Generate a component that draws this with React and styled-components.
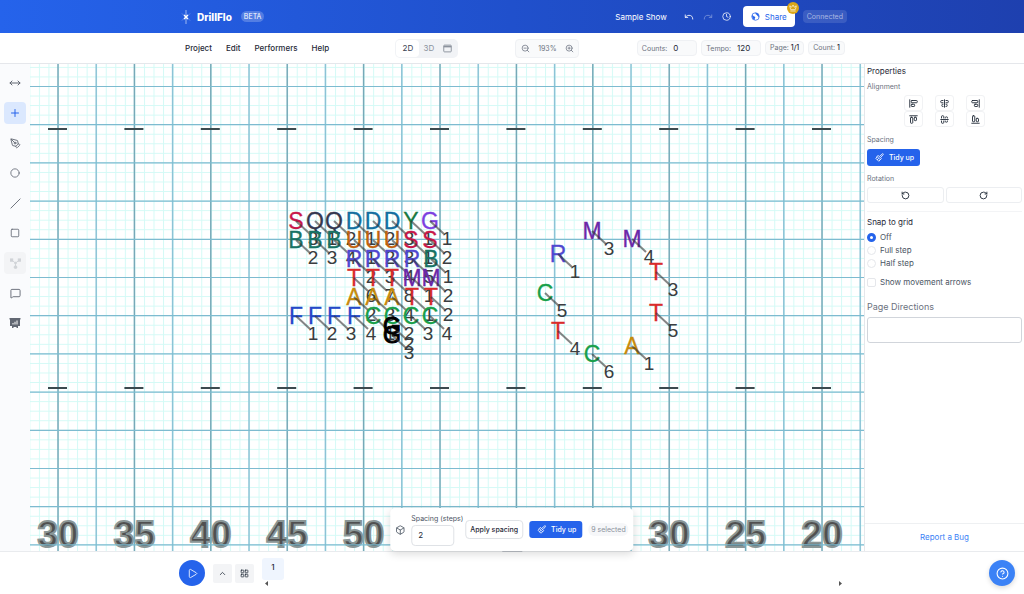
import React, { useState } from "react";
import styled, { createGlobalStyle, css } from "styled-components";
import {
  AlignEndHorizontal,
  AlignEndVertical,
  AlignCenterHorizontal,
  AlignCenterVertical,
  AlignStartHorizontal,
  AlignStartVertical,
  Box,
  ChevronUp,
  CircleHelp,
  Circle,
  Clock,
  Crown,
  LayoutGrid,
  MessageSquare,
  MoveHorizontal,
  PenTool,
  Play,
  Plus,
  Redo,
  RotateCcw,
  RotateCw,
  Slash,
  Square,
  Undo,
  ZoomIn,
  ZoomOut
} from "lucide-react";

const YARD = 76.4;
const FIRST_YARD = 28;
const FIRST_ROW = 22;

const yardNumbers = ["30", "35", "40", "45", "50", "45", "40", "35", "30", "25", "20"];

const colors = {
  S: "#c8174a",
  Q: "#34384f",
  D: "#136f9f",
  Y: "#187a42",
  G: "#7c3fe0",
  B: "#177366",
  U: "#c2630f",
  R: "#5048d0",
  T: "#d92b2b",
  M: "#6b28a8",
  A: "#c78a0c",
  F: "#2448c8",
  C: "#18a04a"
};

// one entry per row of the block: y, first x, symbols, labels
const block = [
  [157, 266, "SQQDDDYG", "31212311"],
  [176, 266, "BBBUUUSS", "23412312"],
  [195, 324, "RRRRB", "23451"],
  [214, 324, "TTTMM", "67812"],
  [233, 324, "AAATT", "23412"],
  [252, 266, "FFFFCCCC", "12341234"]
];

const blockMarchers = block.flatMap(([y, x, symbols, labels]) =>
  symbols.split("").map((symbol, i) => ({ symbol, label: labels[i], x: Math.round(x + i * 19.2), y }))
);

const circleMarchers = [
  { symbol: "M", label: "3", x: 562, y: 167 },
  { symbol: "M", label: "4", x: 602, y: 175 },
  { symbol: "R", label: "1", x: 528, y: 190 },
  { symbol: "T", label: "3", x: 626, y: 208 },
  { symbol: "C", label: "5", x: 515, y: 229 },
  { symbol: "T", label: "5", x: 626, y: 249 },
  { symbol: "T", label: "4", x: 528, y: 267 },
  { symbol: "C", label: "6", x: 562, y: 290 },
  { symbol: "A", label: "1", x: 602, y: 282 }
];

const stacked = [
  { symbol: "G", label: "2", x: 362, y: 262, color: "#000" },
  { symbol: "G", label: "3", x: 362, y: 271, color: "#000" }
];

const marchers = [...blockMarchers, ...stacked, ...circleMarchers];

function BrushIcon() {
  return (
    <svg width="9" height="9" viewBox="0 0 24 24" fill="none" stroke="currentColor" strokeWidth="2.2" strokeLinecap="round" strokeLinejoin="round">
      <path d="M13 8 20 2c1-1 3 1 2 2l-6 7" />
      <path d="m9 7 8 8-3 3-8-8z" />
      <path d="M6 10 2 14l8 8 4-4M6 18l3-3" />
    </svg>
  );
}

function GlobeIcon() {
  return (
    <svg width="9" height="9" viewBox="0 0 24 24" fill="none" stroke="currentColor" strokeWidth="2">
      <circle cx="12" cy="12" r="10" />
      <path d="M3 8c3 0 3 4 6 4s3 3 1 5v4c-4-1-8-6-7-13zM12 2c-1 3 1 5 3 5s1 4 4 4l2 4c2-6-2-12-9-13z" fill="currentColor" stroke="none" />
    </svg>
  );
}

function WindowIcon() {
  return (
    <svg width="9" height="9" viewBox="0 0 24 24" fill="none" stroke="currentColor" strokeWidth="2.5">
      <rect x="2" y="3" width="20" height="18" rx="2" />
      <path d="M2 7h20" strokeWidth="4" />
    </svg>
  );
}

function LogoMark() {
  return (
    <svg width="12" height="16" viewBox="0 0 12 16" fill="none" stroke="#fff">
      <path d="M6 1v14" strokeWidth="0.7" opacity="0.8" />
      <path d="M4 6 8 10M8 6 4 10" strokeWidth="1.5" />
      <path d="M2 4.500 3.500 6M10 4.500 8.500 6M2 11.500 3.500 10M10 11.500 8.500 10" strokeWidth="0.5" opacity="0.6" />
    </svg>
  );
}

function NodesIcon() {
  return (
    <svg width="11" height="11" viewBox="0 0 24 24" fill="currentColor" stroke="currentColor" strokeWidth="2">
      <path d="M4 5 12 11 20 5M12 11v8" fill="none" />
      <rect x="1" y="2" width="5" height="5" />
      <rect x="18" y="2" width="5" height="5" />
      <circle cx="12" cy="11" r="2" />
      <circle cx="12" cy="20" r="3" />
    </svg>
  );
}

function SlidesIcon() {
  return (
    <svg width="12" height="12" viewBox="0 0 24 24">
      <path d="M1 2h22v3h-1v13h-4v4h-3v-2H9v2H6v-4H2V5H1z" fill="currentColor" />
      <path d="M8 15v-3M12 15V9.500M16 15V7" stroke="#fff" strokeWidth="2" />
    </svg>
  );
}

function Marcher({ symbol, label, x, y, color }) {
  const fill = color || colors[symbol];
  return (
    <g>
      <Symbol x={x} y={y + 8} fill={fill} stroke={fill} strokeWidth={color ? 1 : 0.3}>{symbol}</Symbol>
      <line x1={x} y1={y} x2={x + 14} y2={y + 13} stroke="#333" strokeOpacity="0.6" strokeWidth="2" />
      <Label x={x + 17} y={y + 24}>{label}</Label>
    </g>
  );
}

function Field() {
  return (
    <FieldSvg role="img" aria-label="Drill field">
      <defs>
        <pattern id="steps" x={FIRST_YARD} y={FIRST_ROW} width="9.55" height="9.55" patternUnits="userSpaceOnUse">
          <path d="M0 0.500H9.550M0.500 0V9.550" stroke="#d4faf6" fill="none" />
        </pattern>
      </defs>
      <rect width="100%" height="100%" fill="url(#steps)" />
      {yardNumbers.map((number, i) => (
        <YardNumber key={i} x={FIRST_YARD + i * YARD} y="483">{number}</YardNumber>
      ))}
      {Array.from({ length: 22 }, (_, i) => (
        <line
          key={i}
          x1={FIRST_YARD + (i * YARD) / 2}
          x2={FIRST_YARD + (i * YARD) / 2}
          y1="0"
          y2="100%"
          stroke={i % 2 ? "#8cc3d6" : "#76a9b8"}
          strokeWidth="1.500"
        />
      ))}
      {Array.from({ length: 13 }, (_, i) => (
        <line
          key={i}
          x1="0"
          x2="100%"
          y1={FIRST_ROW + 0.5 + (i * YARD) / 2}
          y2={FIRST_ROW + 0.5 + (i * YARD) / 2}
          stroke="#7dbbd0"
          strokeWidth="1.200"
        />
      ))}
      {yardNumbers.map((_, i) => (
        <path
          key={i}
          d={`M${FIRST_YARD - 10 + i * YARD} 65h19M${FIRST_YARD - 10 + i * YARD} 324h19`}
          stroke="#3c4a4f"
          strokeWidth="1.800"
        />
      ))}
      {marchers.map((marcher, i) => (
        <Marcher key={i} {...marcher} />
      ))}
    </FieldSvg>
  );
}

const tools = [
  ["Move", <MoveHorizontal size={12} />],
  ["Add marcher", <Plus size={12} />],
  ["Pen", <PenTool size={11} />],
  ["Circle", <Circle size={10} />],
  ["Line", <Slash size={11} />],
  ["Square", <Square size={10} />],
  ["Nodes", <NodesIcon />],
  ["Comment", <MessageSquare size={11} />],
  ["Slides", <SlidesIcon />]
];

const alignments = [
  ["Align left", AlignStartVertical],
  ["Align center", AlignCenterVertical],
  ["Align right", AlignEndVertical],
  ["Align top", AlignStartHorizontal],
  ["Align middle", AlignCenterHorizontal],
  ["Align bottom", AlignEndHorizontal]
];

function App() {
  const [snap, setSnap] = useState("Off");

  return (
    <Page>
      <GlobalStyle />
      <Header>
        <Container>
          <LogoMark />
          <Brand>DrillFlo</Brand>
          <Beta>BETA</Beta>
          <Filler />
          <ShowName>Sample Show</ShowName>
          <HeaderIcons>
            <HeaderButton aria-label="Undo"><Undo size={10} /></HeaderButton>
            <HeaderButton aria-label="Redo" $dim><Redo size={10} /></HeaderButton>
            <HeaderButton aria-label="History"><Clock size={9} /></HeaderButton>
          </HeaderIcons>
          <ShareButton>
            <GlobeIcon />
            Share
            <CrownBadge><Crown size={8} /></CrownBadge>
          </ShareButton>
          <Status>Connected</Status>
        </Container>
      </Header>

      <MenuBar>
        <Container>
          <Menu>
            <MenuItem>Project</MenuItem>
            <MenuItem>Edit</MenuItem>
            <MenuItem>Performers</MenuItem>
            <MenuItem>Help</MenuItem>
          </Menu>
          <ViewSwitch>
            <ViewButton $active>2D</ViewButton>
            <ViewButton>3D</ViewButton>
            <ViewButton aria-label="Split view"><WindowIcon /></ViewButton>
          </ViewSwitch>
          <ZoomGroup>
            <PlainButton aria-label="Zoom out"><ZoomOut size={9} /></PlainButton>
            <span>193%</span>
            <PlainButton aria-label="Zoom in"><ZoomIn size={9} /></PlainButton>
          </ZoomGroup>
          <Stats>
            <StatField>
              Counts:
              <StatInput defaultValue="0" />
            </StatField>
            <StatField>
              Tempo:
              <StatInput defaultValue="120" />
            </StatField>
            <Stat>Page: <b>1/1</b></Stat>
            <Stat>Count: <b>1</b></Stat>
          </Stats>
        </Container>
      </MenuBar>

      <Workspace>
        <Toolbar>
          {tools.map(([name, icon]) => (
            <Tool key={name} aria-label={name} $active={name === "Add marcher"} $disabled={name === "Nodes"}>
              {icon}
            </Tool>
          ))}
        </Toolbar>
        <Canvas>
          <Field />
        </Canvas>
        <Panel>
          <PanelBody>
            <PanelTitle>Properties</PanelTitle>
            <SectionLabel>Alignment</SectionLabel>
            <AlignGrid>
              {alignments.map(([name, Icon]) => (
                <AlignButton key={name} aria-label={name}><Icon size={9} strokeWidth={2.4} /></AlignButton>
              ))}
            </AlignGrid>
            <SectionLabel>Spacing</SectionLabel>
            <TidyRow>
              <TidyButton>
                <BrushIcon />
                Tidy up
              </TidyButton>
            </TidyRow>
            <SectionLabel>Rotation</SectionLabel>
            <RotationRow>
              <RotateButton aria-label="Rotate left"><RotateCcw size={9} strokeWidth={2.4} /></RotateButton>
              <RotateButton aria-label="Rotate right"><RotateCw size={9} strokeWidth={2.4} /></RotateButton>
            </RotationRow>
            <SnapGroup>
              <Legend>Snap to grid</Legend>
              {["Off", "Full step", "Half step"].map((name) => (
                <Option key={name}>
                  <Radio name="snap" checked={snap === name} onChange={() => setSnap(name)} />
                  {name}
                </Option>
              ))}
            </SnapGroup>
            <Option>
              <Checkbox />
              Show movement arrows
            </Option>
            <DirectionsLabel htmlFor="directions">Page Directions</DirectionsLabel>
            <Directions id="directions" />
          </PanelBody>
          <PanelFooter>
            <a href="#bug">Report a Bug</a>
          </PanelFooter>
        </Panel>
        <SpacingBar>
          <Box size={10} />
          <SpacingField>
            Spacing (steps)
            <SpacingInput defaultValue="2" />
          </SpacingField>
          <ApplyButton>Apply spacing</ApplyButton>
          <TidyButton>
            <BrushIcon />
            Tidy up
          </TidyButton>
          <Selected>9 selected</Selected>
          <Handle />
        </SpacingBar>
      </Workspace>

      <Footer>
        <Timeline>
          <PlayButton aria-label="Play"><Play size={11} strokeWidth={1.8} /></PlayButton>
          <TimelineTools>
            <SmallButton aria-label="Expand"><ChevronUp size={9} /></SmallButton>
            <SmallButton aria-label="Pages"><LayoutGrid size={9} /></SmallButton>
          </TimelineTools>
          <Pages>
            <PageTab>1</PageTab>
            <ScrollTrack>
              <svg width="3" height="5" viewBox="0 0 3 5"><path d="M3 0v5L0 2.500z" fill="#555" /></svg>
              <svg width="3" height="5" viewBox="0 0 3 5"><path d="M0 0v5l3-2.500z" fill="#555" /></svg>
            </ScrollTrack>
          </Pages>
        </Timeline>
        <HelpButton aria-label="Help"><CircleHelp size={13} /></HelpButton>
      </Footer>
    </Page>
  );
}

const GlobalStyle = createGlobalStyle`
  * {
    box-sizing: border-box;
  }
  body {
    margin: 0;
    font-family: Inter, "Liberation Sans", sans-serif;
    font-size: 8px;
    color: #1f2937;
    background: #fff;
  }
  button, input, textarea {
    font: inherit;
    color: inherit;
  }
  button {
    display: flex;
    align-items: center;
    justify-content: center;
    padding: 0;
    border: 0;
    background: none;
    cursor: pointer;
  }
  svg {
    flex: none;
  }
`;

const Page = styled.div`
  display: flex;
  flex-direction: column;
  height: 100vh;
`;

const Header = styled.header`
  display: flex;
  justify-content: center;
  height: 33px;
  color: #fff;
  background: linear-gradient(90deg, #2563eb 0%, #2050cc 50%, #1e40af 100%);
`;

const Container = styled.div`
  display: flex;
  align-items: center;
  width: 100%;
  max-width: 670px;
  padding-left: 3px;
`;

const Brand = styled.span`
  font-size: 10px;
  font-weight: 800;
  margin-left: 5px;
`;

const Beta = styled.span`
  font-size: 7px;
  line-height: 11px;
  margin-left: 9px;
  padding: 0 3px;
  border-radius: 6px;
  background: rgba(255,255,255,0.22);
`;

const Filler = styled.div`
  flex: 1;
`;

const ShowName = styled.span`
  font-weight: 400;
`;

const HeaderIcons = styled.div`
  display: flex;
  gap: 9px;
  margin: 0 11px 0 17px;
`;

const HeaderButton = styled.button`
  width: 10px;
  opacity: ${(props) => (props.$dim ? 0.4 : 1)};
`;

const ShareButton = styled.button`
  position: relative;
  gap: 5px;
  width: 52px;
  height: 21px;
  border-radius: 4px;
  color: #2563eb;
  background: #fff;
  font-weight: 400;
`;

const CrownBadge = styled.span`
  position: absolute;
  top: -4px;
  right: -4px;
  display: flex;
  align-items: center;
  justify-content: center;
  width: 12px;
  height: 12px;
  border-radius: 50%;
  color: #fff;
  background: #dba617;
`;

const Status = styled.span`
  margin-left: 8px;
  padding: 0 4px;
  border-radius: 4px;
  line-height: 13px;
  color: rgba(255,255,255,0.55);
  background: rgba(255,255,255,0.12);
  font-size: 7px;
`;

const MenuBar = styled.div`
  display: flex;
  justify-content: center;
  height: 31px;
  border-bottom: 1px solid #e5e7eb;
`;

const Menu = styled.nav`
  display: flex;
  gap: 14px;
  flex: 213;
  padding-left: 5px;
`;

const MenuItem = styled.button`
  font-weight: 500;
`;

const ViewSwitch = styled.div`
  display: flex;
  align-items: center;
  padding: 1px;
  border-radius: 5px;
  background: #f1f3f6;
`;

const ViewButton = styled.button`
  width: ${(props) => (props.$active ? "23px" : "19px")};
  height: 17px;
  border-radius: 4px;
  color: #8b929d;

  ${(props) =>
    props.$active &&
    css`
      color: #374151;
      background: #fff;
    `}
`;

const ZoomGroup = styled.div`
  display: flex;
  align-items: center;
  justify-content: space-between;
  width: 64px;
  height: 19px;
  margin-left: 57px;
  padding: 0 4px;
  border: 1px solid #eff1f4;
  border-radius: 4px;
  color: #6b7280;
  background: #f9fafb;
  font-size: 7px;
`;

const PlainButton = styled.button`
  width: 10px;
`;

const Stats = styled.div`
  display: flex;
  align-items: center;
  justify-content: flex-end;
  gap: 4px;
  flex: 269;
  padding-right: 2px;
  font-size: 7px;
`;

const Stat = styled.span`
  padding: 0 4px;
  border: 1px solid #eff1f4;
  border-radius: 4px;
  line-height: 12px;
  color: #6b7280;
  background: #f9fafb;

  b {
    color: #1f2937;
    font-weight: 500;
  }
`;

const StatField = styled.label`
  display: flex;
  align-items: center;
  height: 16px;
  padding: 0 4px;
  border: 1px solid #eff1f4;
  border-radius: 4px;
  color: #6b7280;
  background: #f9fafb;
`;

const StatInput = styled.input`
  width: 21px;
  margin-left: 4px;
  padding: 0 2px;
  border: 0;
  outline: 0;
  color: #1f2937;
  background: none;
  font-size: 8px;
`;

const Workspace = styled.main`
  position: relative;
  display: flex;
  flex: 1;
  min-height: 0;
  border-bottom: 1px solid #e9ebee;
`;

const Toolbar = styled.div`
  display: flex;
  flex-direction: column;
  align-items: center;
  gap: 8px;
  width: 30px;
  padding-top: 8px;
  background: #fafbfd;
`;

const Tool = styled.button`
  width: 22px;
  height: 22px;
  border-radius: 4px;
  color: #626873;

  ${(props) =>
    props.$active &&
    css`
      color: #2563eb;
      background: #dbe8fe;
    `}

  ${(props) =>
    props.$disabled &&
    css`
      color: #d0d3d7;
      background: #f3f4f6;
    `}
`;

const Canvas = styled.div`
  flex: 1;
  min-width: 0;
  overflow: hidden;
`;

const FieldSvg = styled.svg`
  display: block;
  width: 100%;
  height: 100%;
  font-family: "Liberation Sans", Arial, sans-serif;
  text-anchor: middle;
`;

const YardNumber = styled.text`
  font-size: 37px;
  font-weight: 700;
  fill: #505050;
  stroke: #8a9696;
  stroke-width: 2px;
`;

const Symbol = styled.text`
  font-size: 23px;
`;

const Label = styled.text`
  font-size: 19px;
  fill: #3a3d40;
`;

const Panel = styled.aside`
  display: flex;
  flex-direction: column;
  width: 160px;
  border-left: 1px solid #e5e7eb;
`;

const PanelBody = styled.div`
  display: flex;
  flex-direction: column;
  align-items: flex-start;
  flex: 1;
  padding: 2px;
`;

const PanelTitle = styled.h2`
  margin: 0 0 5px;
  font-size: 8px;
  line-height: 11px;
  font-weight: 400;
`;

const SectionLabel = styled.span`
  color: #6b7280;
  font-size: 7px;
  line-height: 10px;
`;

const AlignGrid = styled.div`
  display: grid;
  grid-template-columns: repeat(3, 19px);
  column-gap: 12px;
  align-self: center;
  margin: 3px 0 8px;
`;

const AlignButton = styled.button`
  height: 16px;
  border: 1px solid #f1f2f4;
  border-radius: 3px;
`;

const TidyRow = styled.div`
  display: flex;
  margin: 4px 0 8px;
`;

const TidyButton = styled.button`
  gap: 5px;
  height: 17px;
  padding: 0 6px 0 8px;
  border-radius: 3px;
  color: #fff;
  background: #2563eb;
  font-size: 7px;
  font-weight: 500;
  white-space: nowrap;
`;

const RotationRow = styled.div`
  display: flex;
  gap: 2px;
  width: 100%;
  margin-top: 3px;
  padding-bottom: 8px;
  border-bottom: 1px solid #f3f4f6;
`;

const RotateButton = styled.button`
  flex: 1;
  height: 16px;
  border: 1px solid #eceef1;
  border-radius: 3px;
`;

const SnapGroup = styled.fieldset`
  margin: 5px 0 6px;
  padding: 0;
  border: 0;
`;

const Legend = styled.legend`
  padding: 0;
  margin-bottom: 3px;
  line-height: 11px;
  font-weight: 400;
`;

const Option = styled.label`
  display: flex;
  align-items: center;
  gap: 4px;
  line-height: 13px;
  color: #4b5563;
`;

const Radio = styled.input.attrs({ type: "radio" })`
  appearance: none;
  width: 9px;
  height: 9px;
  margin: 0;
  border: 1px solid #e5e7eb;
  border-radius: 50%;
  background: #fff;

  &:checked {
    border: 3px solid #2563eb;
  }
`;

const Checkbox = styled.input.attrs({ type: "checkbox" })`
  appearance: none;
  width: 9px;
  height: 9px;
  margin: 0;
  border: 1px solid #e5e7eb;
  border-radius: 2px;
`;

const DirectionsLabel = styled.label`
  margin: 11px 0 4px;
  color: #6b7280;
  font-size: 9px;
  line-height: 13px;
`;

const Directions = styled.textarea`
  width: 100%;
  height: 26px;
  border: 1px solid #d1d5db;
  border-radius: 3px;
  resize: none;
`;

const PanelFooter = styled.div`
  padding: 8px 0;
  border-top: 1px solid #eef0f2;
  text-align: center;
  line-height: 11px;

  a {
    color: #3b82f6;
    text-decoration: none;
  }
`;

const SpacingBar = styled.div`
  position: absolute;
  bottom: 0;
  left: 50%;
  transform: translateX(-50%);
  display: flex;
  align-items: center;
  gap: 6px;
  height: 43px;
  padding: 0 5px;
  border-radius: 5px;
  color: #4b5563;
  background: #fff;
  box-shadow: 0 3px 8px rgba(0,0,0,0.14);
  white-space: nowrap;
`;

const SpacingField = styled.label`
  display: flex;
  flex-direction: column;
  width: 48px;
  line-height: 10px;
  font-size: 7px;
`;

const SpacingInput = styled.input`
  width: 43px;
  height: 21px;
  margin-top: 1px;
  padding: 0 6px;
  border: 1px solid #dfe2e6;
  border-radius: 4px;
  color: #1f2937;
  font-size: 8px;
`;

const ApplyButton = styled.button`
  height: 19px;
  padding: 0 4px;
  border: 1px solid #dfe2e6;
  border-radius: 4px;
  color: #1f2937;
  font-size: 7px;
  font-weight: 500;
`;

const Selected = styled.span`
  padding: 0 3px;
  border-radius: 6px;
  line-height: 13px;
  color: #8b929d;
  background: #f6f7f9;
  font-size: 7px;
`;

const Handle = styled.span`
  position: absolute;
  bottom: -1px;
  left: 50%;
  width: 20px;
  height: 1px;
  margin-left: -10px;
  background: #a9adb3;
`;

const Footer = styled.footer`
  position: relative;
  display: flex;
  justify-content: center;
  height: 42px;
`;

const Timeline = styled.div`
  display: flex;
  align-items: center;
  width: 100%;
  max-width: 666px;
`;

const PlayButton = styled.button`
  width: 26px;
  height: 26px;
  border-radius: 50%;
  color: #fff;
  background: #2563eb;
`;

const TimelineTools = styled.div`
  display: flex;
  gap: 3px;
  margin: 0 8px;
`;

const SmallButton = styled.button`
  width: 19px;
  height: 19px;
  border-radius: 2px;
  background: #f3f4f6;
`;

const Pages = styled.div`
  display: flex;
  flex-direction: column;
  flex: 1;
  gap: 1px;
  align-self: stretch;
  padding-top: 6px;
`;

const PageTab = styled.button`
  align-items: flex-start;
  width: 22px;
  height: 22px;
  padding-top: 4px;
  border-radius: 3px;
  background: #eff5fe;
  font-weight: 500;
`;

const ScrollTrack = styled.div`
  display: flex;
  justify-content: space-between;
  padding: 0 3px;
`;

const HelpButton = styled.button`
  position: absolute;
  top: 8px;
  right: 9px;
  width: 26px;
  height: 26px;
  border-radius: 50%;
  color: #fff;
  background: #3b82f6;
  box-shadow: 0 2px 5px rgba(0,0,0,0.15);
`;

export default App;
